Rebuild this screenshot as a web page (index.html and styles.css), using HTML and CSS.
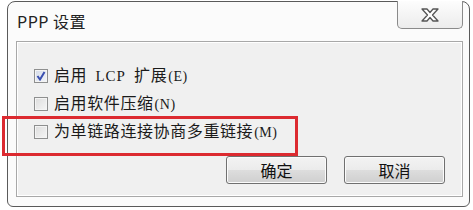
FILE: index.html
```html
<!DOCTYPE html>
<html lang="zh">
<head>
<meta charset="utf-8">
<link rel="stylesheet" href="styles.css">
</head>
<body>
<div class="window">
  <div class="titlebar">
    <div class="title">PPP 设置</div>
    <div class="close">
      <svg width="22" height="16" viewBox="0 0 22 16"><path d="M3 2 L8 2 L11 5.5 L14 2 L19 2 L13.5 8 L19 14 L14 14 L11 10.5 L8 14 L3 14 L8.5 8 Z" fill="#fff" stroke="#555" stroke-width="1.3" stroke-linejoin="round"/></svg>
    </div>
  </div>
  <div class="client">
    <div class="options">
      <label class="opt"><span class="cb checked"><svg width="10" height="10" viewBox="0 0 10 10"><path d="M1.5 5 L4 8.5 L8.5 1" fill="none" stroke="#3a4fb0" stroke-width="2"/></svg></span><span class="lbl">启用 <span class="mono">LCP</span> 扩展<span class="key">(E)</span></span></label>
      <label class="opt"><span class="cb"></span><span class="lbl">启用软件压缩<span class="key">(N)</span></span></label>
      <label class="opt"><span class="cb"></span><span class="lbl">为单链路连接协商多重链接<span class="key">(M)</span></span></label>
    </div>
    <div class="buttons">
      <button class="btn">确定</button>
      <button class="btn">取消</button>
    </div>
  </div>
  <div class="highlight"></div>
</div>
</body>
</html>
```
FILE: styles.css
```css
html, body {
  margin: 0;
  padding: 0;
  background: #ffffff;
}
body {
  width: 473px;
  height: 210px;
  overflow: hidden;
  font-family: "Noto Sans CJK SC", "Noto Sans", sans-serif;
  color: #1a1a1a;
}
.window {
  position: relative;
  margin: 1px 0 0 7px;
  width: 463px;
  height: 206px;
  box-sizing: border-box;
  border: 1px solid #5a5a5a;
  border-radius: 8px 8px 6px 6px;
  background: #fbfbfb;
  display: flex;
  flex-direction: column;
}
.titlebar {
  height: 39px;
  display: flex;
  align-items: flex-start;
  justify-content: space-between;
}
.title {
  margin: 9px 0 0 9px;
  font-size: 16px;
  line-height: 20px;
  color: #222;
  letter-spacing: 0.5px;
}
.close {
  margin: -1px 6px 0 0;
  width: 66px;
  height: 28px;
  box-sizing: border-box;
  border: 1px solid #8a8a8a;
  border-top: none;
  border-radius: 0 0 5px 5px;
  background: linear-gradient(#fdfdfd, #ececec);
  display: flex;
  align-items: center;
  justify-content: center;
}
.client {
  margin: 0 6px 9px 8px;
  flex: 1;
  border: 1px solid #a8a8a8;
  box-shadow: inset 0 0 0 1px #ffffff;
  background: #f0f0f0;
  display: flex;
  flex-direction: column;
  padding: 23px 17px 12px 17px;
  box-sizing: border-box;
}
.options {
  display: flex;
  flex-direction: column;
  gap: 7px;
}
.opt {
  display: flex;
  align-items: center;
  height: 21px;
  gap: 6px;
  font-size: 16px;
  letter-spacing: 0.6px;
}
.cb {
  width: 14px;
  height: 14px;
  box-sizing: border-box;
  border: 1px solid #8e8f8f;
  background: linear-gradient(135deg, #dcdcdc, #f6f6f6);
  box-shadow: inset 0 0 0 1px #f4f4f4;
  display: flex;
  align-items: center;
  justify-content: center;
}
.cb.checked {
  background: linear-gradient(135deg, #d4dbe8, #f3f5f9);
}
.lbl {
  line-height: 21px;
  white-space: nowrap;
}
.mono {
  font-family: "Liberation Serif", serif;
  font-size: 15px;
  margin: 0 4px;
  letter-spacing: 1px;
}
.key {
  font-family: "Liberation Serif", serif;
  font-size: 14px;
  letter-spacing: 0.5px;
  margin-left: 1px;
}
.buttons {
  margin-top: auto;
  display: flex;
  justify-content: flex-end;
  gap: 17px;
}
.btn {
  width: 101px;
  height: 28px;
  border: 1px solid #707070;
  border-radius: 3px;
  background: linear-gradient(#f3f3f3 0%, #ebebeb 50%, #dddddd 51%, #cfcfcf 100%);
  box-shadow: inset 0 0 0 1px #fbfbfb;
  font-family: "Noto Sans CJK SC", sans-serif;
  font-size: 16px;
  color: #111;
  padding: 0;
  line-height: 24px;
}
.highlight {
  position: absolute;
  left: -6px;
  top: 114px;
  width: 296px;
  height: 40px;
  box-sizing: border-box;
  border: 3px solid #dc2a30;
}
```
